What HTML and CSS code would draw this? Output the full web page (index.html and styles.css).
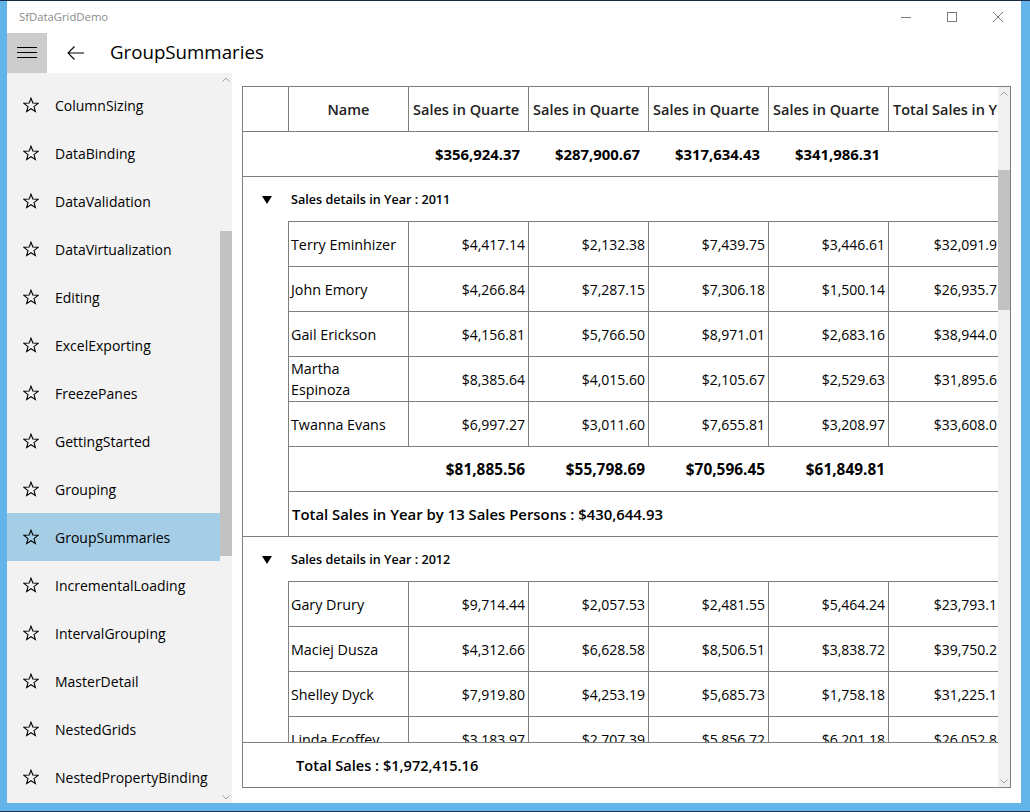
FILE: index.html
```html
<!DOCTYPE html>
<html lang="en">
<head>
<meta charset="utf-8">
<title>SfDataGridDemo</title>
<link rel="stylesheet" href="styles.css">
</head>
<body>
<div class="window">
  <div class="titlebar">
    <span class="apptitle">SfDataGridDemo</span>
    <div class="controls">
      <span class="ctl"><svg width="10" height="10" viewBox="0 0 10 10"><line x1="0" y1="5.5" x2="10" y2="5.5" stroke="#7a7a7a" stroke-width="1"/></svg></span>
      <span class="ctl"><svg width="10" height="10" viewBox="0 0 10 10"><rect x="0.5" y="0.5" width="9" height="9" fill="none" stroke="#7a7a7a" stroke-width="1"/></svg></span>
      <span class="ctl"><svg width="10" height="10" viewBox="0 0 10 10"><path d="M0 0L10 10M10 0L0 10" stroke="#7a7a7a" stroke-width="1"/></svg></span>
    </div>
  </div>
  <div class="header">
    <div class="hamburger"><svg width="20" height="12" viewBox="0 0 20 12"><path d="M0 0.5H20M0 5.5H20M0 10.5H20" stroke="#000" stroke-width="1"/></svg></div>
    <div class="back"><svg width="17" height="14" viewBox="0 0 17 14"><path d="M0.8 7H17M7.5 0.5L1 7L7.5 13.5" fill="none" stroke="#000" stroke-width="1.1"/></svg></div>
    <h1 class="pagetitle">GroupSummaries</h1>
  </div>
  <div class="content">
    <nav class="sidebar">
      <ul class="navlist">
        <li class="navitem"><svg class="star" width="16" height="16" viewBox="0 0 16 16"><polygon points="8,1.2 9.85,6.05 15.04,6.31 11,9.6 12.35,14.59 8,11.75 3.65,14.59 5,9.6 0.96,6.31 6.15,6.05" fill="none" stroke="#000" stroke-width="1.1"/></svg><span>ColumnSizing</span></li>
        <li class="navitem"><svg class="star" width="16" height="16" viewBox="0 0 16 16"><polygon points="8,1.2 9.85,6.05 15.04,6.31 11,9.6 12.35,14.59 8,11.75 3.65,14.59 5,9.6 0.96,6.31 6.15,6.05" fill="none" stroke="#000" stroke-width="1.1"/></svg><span>DataBinding</span></li>
        <li class="navitem"><svg class="star" width="16" height="16" viewBox="0 0 16 16"><polygon points="8,1.2 9.85,6.05 15.04,6.31 11,9.6 12.35,14.59 8,11.75 3.65,14.59 5,9.6 0.96,6.31 6.15,6.05" fill="none" stroke="#000" stroke-width="1.1"/></svg><span>DataValidation</span></li>
        <li class="navitem"><svg class="star" width="16" height="16" viewBox="0 0 16 16"><polygon points="8,1.2 9.85,6.05 15.04,6.31 11,9.6 12.35,14.59 8,11.75 3.65,14.59 5,9.6 0.96,6.31 6.15,6.05" fill="none" stroke="#000" stroke-width="1.1"/></svg><span>DataVirtualization</span></li>
        <li class="navitem"><svg class="star" width="16" height="16" viewBox="0 0 16 16"><polygon points="8,1.2 9.85,6.05 15.04,6.31 11,9.6 12.35,14.59 8,11.75 3.65,14.59 5,9.6 0.96,6.31 6.15,6.05" fill="none" stroke="#000" stroke-width="1.1"/></svg><span>Editing</span></li>
        <li class="navitem"><svg class="star" width="16" height="16" viewBox="0 0 16 16"><polygon points="8,1.2 9.85,6.05 15.04,6.31 11,9.6 12.35,14.59 8,11.75 3.65,14.59 5,9.6 0.96,6.31 6.15,6.05" fill="none" stroke="#000" stroke-width="1.1"/></svg><span>ExcelExporting</span></li>
        <li class="navitem"><svg class="star" width="16" height="16" viewBox="0 0 16 16"><polygon points="8,1.2 9.85,6.05 15.04,6.31 11,9.6 12.35,14.59 8,11.75 3.65,14.59 5,9.6 0.96,6.31 6.15,6.05" fill="none" stroke="#000" stroke-width="1.1"/></svg><span>FreezePanes</span></li>
        <li class="navitem"><svg class="star" width="16" height="16" viewBox="0 0 16 16"><polygon points="8,1.2 9.85,6.05 15.04,6.31 11,9.6 12.35,14.59 8,11.75 3.65,14.59 5,9.6 0.96,6.31 6.15,6.05" fill="none" stroke="#000" stroke-width="1.1"/></svg><span>GettingStarted</span></li>
        <li class="navitem"><svg class="star" width="16" height="16" viewBox="0 0 16 16"><polygon points="8,1.2 9.85,6.05 15.04,6.31 11,9.6 12.35,14.59 8,11.75 3.65,14.59 5,9.6 0.96,6.31 6.15,6.05" fill="none" stroke="#000" stroke-width="1.1"/></svg><span>Grouping</span></li>
        <li class="navitem selected"><svg class="star" width="16" height="16" viewBox="0 0 16 16"><polygon points="8,1.2 9.85,6.05 15.04,6.31 11,9.6 12.35,14.59 8,11.75 3.65,14.59 5,9.6 0.96,6.31 6.15,6.05" fill="none" stroke="#000" stroke-width="1.1"/></svg><span>GroupSummaries</span></li>
        <li class="navitem"><svg class="star" width="16" height="16" viewBox="0 0 16 16"><polygon points="8,1.2 9.85,6.05 15.04,6.31 11,9.6 12.35,14.59 8,11.75 3.65,14.59 5,9.6 0.96,6.31 6.15,6.05" fill="none" stroke="#000" stroke-width="1.1"/></svg><span>IncrementalLoading</span></li>
        <li class="navitem"><svg class="star" width="16" height="16" viewBox="0 0 16 16"><polygon points="8,1.2 9.85,6.05 15.04,6.31 11,9.6 12.35,14.59 8,11.75 3.65,14.59 5,9.6 0.96,6.31 6.15,6.05" fill="none" stroke="#000" stroke-width="1.1"/></svg><span>IntervalGrouping</span></li>
        <li class="navitem"><svg class="star" width="16" height="16" viewBox="0 0 16 16"><polygon points="8,1.2 9.85,6.05 15.04,6.31 11,9.6 12.35,14.59 8,11.75 3.65,14.59 5,9.6 0.96,6.31 6.15,6.05" fill="none" stroke="#000" stroke-width="1.1"/></svg><span>MasterDetail</span></li>
        <li class="navitem"><svg class="star" width="16" height="16" viewBox="0 0 16 16"><polygon points="8,1.2 9.85,6.05 15.04,6.31 11,9.6 12.35,14.59 8,11.75 3.65,14.59 5,9.6 0.96,6.31 6.15,6.05" fill="none" stroke="#000" stroke-width="1.1"/></svg><span>NestedGrids</span></li>
        <li class="navitem"><svg class="star" width="16" height="16" viewBox="0 0 16 16"><polygon points="8,1.2 9.85,6.05 15.04,6.31 11,9.6 12.35,14.59 8,11.75 3.65,14.59 5,9.6 0.96,6.31 6.15,6.05" fill="none" stroke="#000" stroke-width="1.1"/></svg><span>NestedPropertyBinding</span></li>
      </ul>
      <div class="vscroll side">
        <div class="sarrow"><svg width="8" height="5" viewBox="0 0 8 5"><path d="M0.5 4.5L4 1L7.5 4.5" fill="none" stroke="#a0a0a0" stroke-width="1"/></svg></div>
        <div class="thumb side-thumb"></div>
        <div class="sfill"></div>
        <div class="sarrow"><svg width="8" height="5" viewBox="0 0 8 5"><path d="M0.5 0.5L4 4L7.5 0.5" fill="none" stroke="#a0a0a0" stroke-width="1"/></svg></div>
      </div>
    </nav>
    <main class="main">
      <div class="grid">
        <div class="gcontent">
          <div class="row hrow">
            <div class="cell indent bl"></div>
            <div class="cell col bl hname">Name</div>
            <div class="cell col bl htext">Sales in Quarte</div>
            <div class="cell col bl htext">Sales in Quarte</div>
            <div class="cell col bl htext">Sales in Quarte</div>
            <div class="cell col bl htext">Sales in Quarte</div>
            <div class="cell col bl htext">Total Sales in Y</div>
          </div>
          <div class="row srow">
            <div class="cell indent"></div>
            <div class="cell col"></div>
            <div class="cell col sval">$356,924.37</div>
            <div class="cell col sval">$287,900.67</div>
            <div class="cell col sval">$317,634.43</div>
            <div class="cell col sval">$341,986.31</div>
            <div class="cell col"></div>
          </div>
          <div class="gbodyarea">
            <div class="group">
              <div class="caption">
                <div class="expander"><svg width="10" height="8" viewBox="0 0 10 8"><polygon points="0,0 10,0 5,8" fill="#000"/></svg></div>
                <span class="captext">Sales details in Year : 2011</span>
              </div>
              <div class="gbody">
                <div class="gindent"></div>
                <div class="grows">
                  <div class="drow"><div class="cell col bl name">Terry Eminhizer</div><div class="cell col bl num">$4,417.14</div><div class="cell col bl num">$2,132.38</div><div class="cell col bl num">$7,439.75</div><div class="cell col bl num">$3,446.61</div><div class="cell col bl num tot">$32,091.9</div></div>
                  <div class="drow"><div class="cell col bl name">John Emory</div><div class="cell col bl num">$4,266.84</div><div class="cell col bl num">$7,287.15</div><div class="cell col bl num">$7,306.18</div><div class="cell col bl num">$1,500.14</div><div class="cell col bl num tot">$26,935.7</div></div>
                  <div class="drow"><div class="cell col bl name">Gail Erickson</div><div class="cell col bl num">$4,156.81</div><div class="cell col bl num">$5,766.50</div><div class="cell col bl num">$8,971.01</div><div class="cell col bl num">$2,683.16</div><div class="cell col bl num tot">$38,944.0</div></div>
                  <div class="drow"><div class="cell col bl name two">Martha<br>Espinoza</div><div class="cell col bl num">$8,385.64</div><div class="cell col bl num">$4,015.60</div><div class="cell col bl num">$2,105.67</div><div class="cell col bl num">$2,529.63</div><div class="cell col bl num tot">$31,895.6</div></div>
                  <div class="drow"><div class="cell col bl name">Twanna Evans</div><div class="cell col bl num">$6,997.27</div><div class="cell col bl num">$3,011.60</div><div class="cell col bl num">$7,655.81</div><div class="cell col bl num">$3,208.97</div><div class="cell col bl num tot">$33,608.0</div></div>
                  <div class="drow"><div class="cell col"></div><div class="cell col gval">$81,885.56</div><div class="cell col gval">$55,798.69</div><div class="cell col gval">$70,596.45</div><div class="cell col gval">$61,849.81</div><div class="cell col"></div></div>
                  <div class="drow"><div class="capsum">Total Sales in Year by 13 Sales Persons : $430,644.93</div></div>
                </div>
              </div>
            </div>
            <div class="group">
              <div class="caption">
                <div class="expander"><svg width="10" height="8" viewBox="0 0 10 8"><polygon points="0,0 10,0 5,8" fill="#000"/></svg></div>
                <span class="captext">Sales details in Year : 2012</span>
              </div>
              <div class="gbody">
                <div class="gindent"></div>
                <div class="grows">
                  <div class="drow"><div class="cell col bl name">Gary Drury</div><div class="cell col bl num">$9,714.44</div><div class="cell col bl num">$2,057.53</div><div class="cell col bl num">$2,481.55</div><div class="cell col bl num">$5,464.24</div><div class="cell col bl num tot">$23,793.1</div></div>
                  <div class="drow"><div class="cell col bl name">Maciej Dusza</div><div class="cell col bl num">$4,312.66</div><div class="cell col bl num">$6,628.58</div><div class="cell col bl num">$8,506.51</div><div class="cell col bl num">$3,838.72</div><div class="cell col bl num tot">$39,750.2</div></div>
                  <div class="drow"><div class="cell col bl name">Shelley Dyck</div><div class="cell col bl num">$7,919.80</div><div class="cell col bl num">$4,253.19</div><div class="cell col bl num">$5,685.73</div><div class="cell col bl num">$1,758.18</div><div class="cell col bl num tot">$31,225.1</div></div>
                  <div class="drow"><div class="cell col bl name">Linda Ecoffey</div><div class="cell col bl num">$3,183.97</div><div class="cell col bl num">$2,707.39</div><div class="cell col bl num">$5,856.72</div><div class="cell col bl num">$6,201.18</div><div class="cell col bl num tot">$26,052.8</div></div>
                </div>
              </div>
            </div>
          </div>
          <div class="footer">Total Sales : $1,972,415.16</div>
        </div>
        <div class="vscroll gridscroll">
          <div class="sarrow"><svg width="8" height="5" viewBox="0 0 8 5"><path d="M0.5 4.5L4 1L7.5 4.5" fill="none" stroke="#a0a0a0" stroke-width="1"/></svg></div>
          <div class="thumb grid-thumb"></div>
          <div class="sfill"></div>
          <div class="sarrow"><svg width="8" height="5" viewBox="0 0 8 5"><path d="M0.5 0.5L4 4L7.5 0.5" fill="none" stroke="#a0a0a0" stroke-width="1"/></svg></div>
        </div>
      </div>
    </main>
  </div>
</div>
</body>
</html>
```
FILE: styles.css
```css
* { box-sizing: border-box; }
html, body { margin: 0; padding: 0; }
body {
  width: 1030px;
  height: 812px;
  background: #63b5e9;
  border-top: 1px solid #1b2a46;
  border-bottom: 1px solid #24344f;
  font-family: "Open Sans", "Noto Sans", sans-serif;
  color: #000;
  overflow: hidden;
}
.window {
  margin-left: 7px;
  width: 1014px;
  height: 802px;
  background: #fff;
  display: flex;
  flex-direction: column;
}
.titlebar {
  height: 32px;
  display: flex;
  align-items: center;
  flex: none;
}
.apptitle {
  padding-left: 12px;
  font-size: 11.3px;
  color: #8a8a8a;
  flex: 1;
  margin-top: -1px;
}
.controls { display: flex; height: 32px; }
.ctl {
  width: 46px;
  height: 32px;
  display: flex;
  align-items: center;
  justify-content: center;
}
.ctl svg { display: block; margin-top: -1px; }
.header {
  height: 40px;
  display: flex;
  align-items: center;
  flex: none;
}
.hamburger {
  width: 40px;
  height: 40px;
  background: #cccccc;
  display: flex;
  align-items: center;
  justify-content: center;
}
.hamburger svg { display: block; }
.back {
  width: 17px;
  margin-left: 20px;
  display: flex;
  align-items: center;
}
.back svg { display: block; }
.pagetitle {
  margin: -3px 0 0 26px;
  font-size: 18.7px;
  font-weight: 400;
  line-height: 24px;
}
.content {
  flex: 1;
  display: flex;
  min-height: 0;
}
.sidebar {
  width: 225px;
  background: #f2f2f2;
  display: flex;
  flex: none;
  overflow: hidden;
}
.navlist {
  list-style: none;
  margin: 0;
  padding: 8px 0 0 0;
  width: 213px;
  flex: none;
}
.navitem {
  height: 48px;
  display: flex;
  align-items: center;
  padding-left: 16px;
  font-size: 14px;
  white-space: nowrap;
}
.navitem .star { display: block; flex: none; margin-right: 16px; margin-top: -1px; }
.navitem.selected { background: #a6cde6; }
.vscroll {
  width: 12px;
  display: flex;
  flex-direction: column;
  align-items: center;
  flex: none;
}
.sarrow {
  height: 12px;
  width: 12px;
  display: flex;
  align-items: center;
  justify-content: center;
}
.sarrow svg { display: block; }
.thumb { width: 12px; background: #c2c2c2; flex: none; }
.side-thumb { margin-top: 146px; height: 325px; }
.gridscroll { background: #f0f0f0; }
.grid-thumb { margin-top: 71px; height: 140px; }
.sfill { flex: 1; }
.main {
  flex: 1;
  background: #fff;
  padding: 13px 10px 15px 10px;
  display: flex;
}
.grid {
  flex: 1;
  border: 1px solid #7f7f7f;
  display: flex;
  min-width: 0;
}
.gcontent {
  width: 755px;
  flex: none;
  overflow: hidden;
  display: flex;
  flex-direction: column;
}
.row {
  display: flex;
  height: 45px;
  flex: none;
  border-bottom: 1px solid #7f7f7f;
  width: 766px;
}
.cell {
  flex: none;
  height: 100%;
  display: flex;
  align-items: center;
  overflow: hidden;
  white-space: nowrap;
  font-size: 14px;
  color: #000;
}
.indent { width: 46px; }
.col { width: 120px; }
.bl { border-right: 1px solid #7f7f7f; }
.hrow .cell { font-weight: 600; color: #222; font-size: 14.5px; }
.hname { justify-content: center; }
.htext { padding-left: 4px; }
.sval {
  justify-content: flex-end;
  padding-right: 9px;
  font-weight: 700;
  font-size: 14.9px;
}
.gbodyarea {
  flex: 1;
  min-height: 0;
  overflow: hidden;
}
.group { border-bottom: 1px solid #7f7f7f; width: 766px; }
.caption {
  height: 44px;
  display: flex;
  align-items: center;
}
.expander {
  width: 46px;
  display: flex;
  justify-content: center;
  padding-left: 1px;
  margin-top: 1px;
}
.expander svg { display: block; }
.captext {
  font-size: 12.6px;
  font-weight: 600;
  padding-left: 2px;
  margin-top: 1px;
}
.gbody { display: flex; }
.gindent { width: 46px; border-right: 1px solid #7f7f7f; flex: none; }
.grows { flex: none; width: 720px; }
.drow {
  display: flex;
  height: 45px;
  border-top: 1px solid #7f7f7f;
}
.name { padding-left: 2px; font-size: 14.3px; }
.name.two { line-height: 21px; white-space: normal; }
.num { justify-content: flex-end; padding-right: 3px; }
.num.tot { padding-right: 11px; }
.gval {
  justify-content: flex-end;
  padding-right: 4px;
  font-weight: 700;
  font-size: 15.4px;
}
.capsum {
  display: flex;
  align-items: center;
  padding-left: 3px;
  font-size: 14.9px;
  font-weight: 600;
  white-space: nowrap;
}
.footer {
  height: 45px;
  flex: none;
  border-top: 1px solid #7f7f7f;
  display: flex;
  align-items: center;
  padding-left: 53px;
  font-size: 14.6px;
  font-weight: 600;
  white-space: nowrap;
}
```
